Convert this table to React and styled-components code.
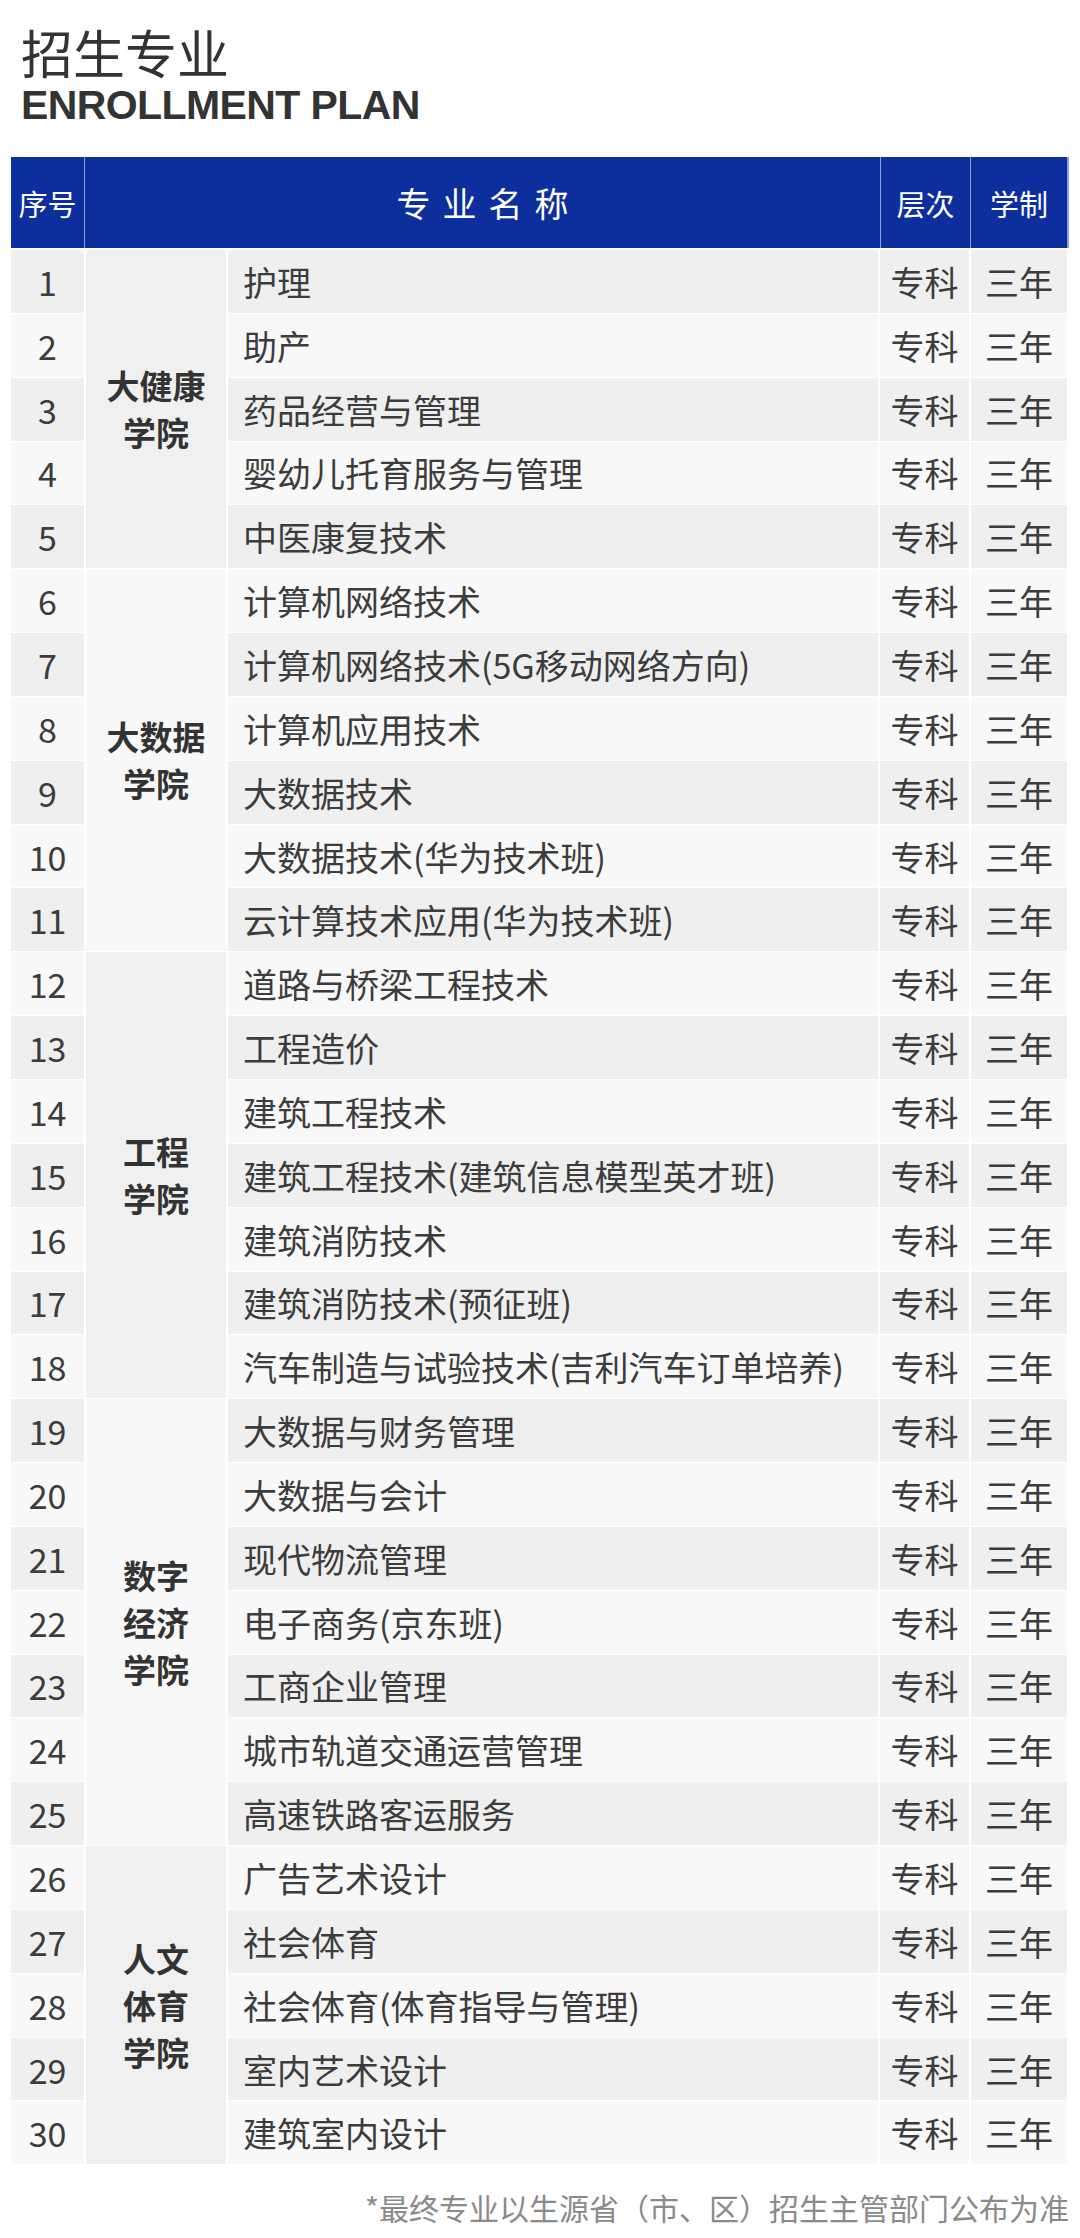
import React from "react";
import styled, { createGlobalStyle } from "styled-components";

const GlobalStyle = createGlobalStyle`
  html, body {
    margin: 0;
    padding: 0;
    background: #ffffff;
  }
  body {
    font-family: "Noto Sans CJK SC", "Noto Sans", sans-serif;
    color: #333333;
  }
`;

const GROUPS = [
  {
    name: ["大健康", "学院"],
    items: ["护理", "助产", "药品经营与管理", "婴幼儿托育服务与管理", "中医康复技术"],
  },
  {
    name: ["大数据", "学院"],
    items: [
      "计算机网络技术",
      "计算机网络技术(5G移动网络方向)",
      "计算机应用技术",
      "大数据技术",
      "大数据技术(华为技术班)",
      "云计算技术应用(华为技术班)",
    ],
  },
  {
    name: ["工程", "学院"],
    items: [
      "道路与桥梁工程技术",
      "工程造价",
      "建筑工程技术",
      "建筑工程技术(建筑信息模型英才班)",
      "建筑消防技术",
      "建筑消防技术(预征班)",
      "汽车制造与试验技术(吉利汽车订单培养)",
    ],
  },
  {
    name: ["数字", "经济", "学院"],
    items: [
      "大数据与财务管理",
      "大数据与会计",
      "现代物流管理",
      "电子商务(京东班)",
      "工商企业管理",
      "城市轨道交通运营管理",
      "高速铁路客运服务",
    ],
  },
  {
    name: ["人文", "体育", "学院"],
    items: ["广告艺术设计", "社会体育", "社会体育(体育指导与管理)", "室内艺术设计", "建筑室内设计"],
  },
];

const Page = styled.div`
  width: 1080px;
  min-height: 2238px;
  box-sizing: border-box;
  padding: 16px 11px 0 11px;
`;

const Heading = styled.div`
  padding-left: 10px;
  margin-bottom: 35px;
`;

const TitleCn = styled.div`
  font-size: 52px;
  line-height: 72px;
  color: #333333;
`;

const TitleEn = styled.div`
  font-family: "Liberation Sans", Arial, sans-serif;
  font-weight: 700;
  font-size: 41px;
  line-height: 34px;
  letter-spacing: -0.6px;
  color: #333333;
`;

const HeaderRow = styled.div`
  display: grid;
  grid-template-columns: 73px 795px 89px 96px;
  column-gap: 1px;
  height: 91px;
  background: #8c9fdc;
  margin-bottom: 2px;
`;

const HeadCell = styled.div`
  background: #0d2f9d;
  color: #ffffff;
  display: flex;
  align-items: center;
  justify-content: center;
  font-size: ${(p) => (p.wide ? "34px" : "29px")};
  letter-spacing: ${(p) => (p.wide ? "12px" : "0")};
  text-indent: ${(p) => (p.wide ? "12px" : "0")};
`;

const Body = styled.div`
  display: grid;
  grid-template-columns: 73px 140px 650px 89px 96px;
  grid-auto-rows: 62.85px;
  column-gap: 2px;
  row-gap: 1px;
`;

const Cell = styled.div`
  grid-column: ${(p) => p.col};
  background: ${(p) => (p.odd ? "#efefef" : "#f8f8f8")};
  display: flex;
  align-items: center;
  justify-content: ${(p) => (p.left ? "flex-start" : "center")};
  padding-left: ${(p) => (p.left ? "15px" : "0")};
  font-size: 34px;
  color: #3c3c3c;
  white-space: nowrap;
`;

const CollegeCell = styled.div`
  grid-column: 2;
  grid-row: ${(p) => p.start} / span ${(p) => p.span};
  background: ${(p) => (p.shade ? "#f0f0f0" : "#f8f8f8")};
  display: flex;
  flex-direction: column;
  align-items: center;
  justify-content: center;
  font-size: 33px;
  line-height: 47px;
  font-weight: 700;
  color: #333333;
`;

const Note = styled.div`
  text-align: right;
  font-size: 30px;
  color: #8a8a8a;
  margin-top: 21px;
`;

function App() {
  let row = 0;
  const cells = [];
  GROUPS.forEach((group, gi) => {
    const start = row + 1;
    group.items.forEach((item, ii) => {
      row += 1;
      const odd = row % 2 === 1;
      cells.push(
        <Cell key={`n${row}`} col={1} odd={odd} style={{ gridRow: row }}>
          {row}
        </Cell>
      );
      if (ii === 0) {
        cells.push(
          <CollegeCell key={`c${gi}`} start={start} span={group.items.length} shade={gi % 2 === 0}>
            {group.name.map((line) => (
              <span key={line}>{line}</span>
            ))}
          </CollegeCell>
        );
      }
      cells.push(
        <Cell key={`m${row}`} col={3} odd={odd} left style={{ gridRow: row }}>
          {item}
        </Cell>,
        <Cell key={`l${row}`} col={4} odd={odd} style={{ gridRow: row }}>
          专科
        </Cell>,
        <Cell key={`y${row}`} col={5} odd={odd} style={{ gridRow: row }}>
          三年
        </Cell>
      );
    });
  });

  return (
    <>
      <GlobalStyle />
      <Page>
        <Heading>
          <TitleCn>招生专业</TitleCn>
          <TitleEn>ENROLLMENT PLAN</TitleEn>
        </Heading>
        <HeaderRow>
          <HeadCell>序号</HeadCell>
          <HeadCell wide>专业名称</HeadCell>
          <HeadCell>层次</HeadCell>
          <HeadCell>学制</HeadCell>
        </HeaderRow>
        <Body>{cells}</Body>
        <Note>*最终专业以生源省（市、区）招生主管部门公布为准</Note>
      </Page>
    </>
  );
}

export default App;
